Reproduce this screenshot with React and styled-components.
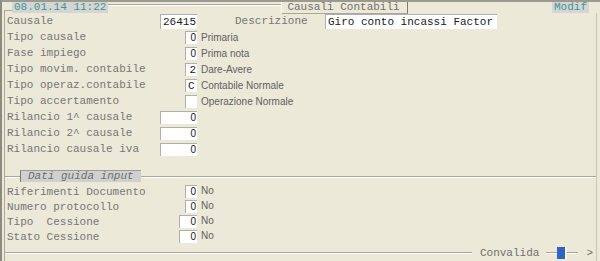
import React from 'react';
import styled, { createGlobalStyle } from 'styled-components';

const MONO = '"Liberation Mono", "Courier New", monospace';
const SANS = '"Liberation Sans", Arial, sans-serif';

const GlobalStyle = createGlobalStyle`
  html, body {
    margin: 0;
    padding: 0;
    background: #ece9d8;
  }
`;

// Window shell.
const Screen = styled.div`
  box-sizing: border-box;
  width: 600px;
  height: 261px;
  background: #ece9d8;
  border-top: 2px solid #9c9a8e;
  border-left: 2px solid #8d8b80;
  padding: 0 2px;
  display: flex;
  flex-direction: column;
  font-family: ${MONO};
  font-size: 11px;
  color: #767676;
  overflow: hidden;
`;

// Header with the tabs sitting on the frame edge.
const Header = styled.div`
  display: flex;
  align-items: flex-start;
  height: 11px;
  flex-shrink: 0;
`;

const Corner = styled.div`
  box-sizing: border-box;
  align-self: flex-end;
  width: 8px;
  height: 3px;
  border-top: 1px solid #aca899;
  border-left: 1px solid #aca899;
`;

const InfoTab = styled.div`
  height: 12px;
  line-height: 12px;
  padding: 0 2px;
  background: #d5d5d3;
  color: #3b9898;
  white-space: nowrap;
  margin-top: -1px;
`;

const Rule = styled.div`
  width: ${(p) => (p.$w ? `${p.$w}px` : 'auto')};
  flex: ${(p) => (p.$w ? '0 0 auto' : '1')};
  margin-top: ${(p) => p.$top ?? 2}px;
  border-top: 1px solid #aca899;
  border-bottom: 1px solid #fff;
`;

const TitleTab = styled.div`
  box-sizing: border-box;
  width: 127px;
  height: 13px;
  line-height: 12px;
  padding-left: 5px;
  margin-top: -1px;
  border-left: 1px solid #fff;
  border-right: 1px solid #7d7b70;
  border-bottom: 1px solid #aca899;
  color: #707070;
  white-space: nowrap;
`;

const Gap = styled.div`
  flex: 1;
`;

const Trail = styled.div`
  width: 9px;
`;

// Main frame.
const Frame = styled.div`
  flex: 1;
  display: flex;
  flex-direction: column;
  margin-right: 1px;
  padding-left: 2px;
  border-left: 1px solid #aca899;
  border-right: 1px solid #c9c6b6;
`;

const Rows = styled.div`
  display: flex;
  flex-direction: column;
`;

const Row = styled.div`
  display: flex;
  align-items: center;
  height: ${(p) => p.$h || 16}px;
  white-space: pre;
`;

const Label = styled.div`
  width: 153px;
  flex-shrink: 0;
`;

const Field = styled.div`
  width: 37px;
  display: flex;
  justify-content: flex-end;
  flex-shrink: 0;
`;

const Box = styled.div`
  box-sizing: border-box;
  width: ${(p) => p.$w}px;
  height: ${(p) => p.$h || 13}px;
  line-height: ${(p) => (p.$h || 13) - 1}px;
  background: #fff;
  border-top: 1px solid #b0b0ab;
  border-left: 1px solid #b0b0ab;
  padding: 0 1px 0 2px;
  text-align: ${(p) => (p.$left ? 'left' : 'right')};
  color: #1a1a1a;
  font-family: ${(p) => (p.$sans ? SANS : MONO)};
  font-size: ${(p) => (p.$sans ? 10 : 11)}px;
  overflow: hidden;
`;

const Note = styled.div`
  margin-left: 4px;
  font-family: ${SANS};
  font-size: 10px;
  color: #606060;
  align-self: ${(p) => (p.$up ? 'flex-start' : 'center')};
  margin-top: ${(p) => (p.$up ? 1 : 0)}px;
`;

const DescLabel = styled.div`
  margin-left: 38px;
  width: 90px;
`;

// Section header "Dati guida input".
const SectionHead = styled.div`
  display: flex;
  align-items: flex-start;
  height: 12px;
  margin: 13px 0 2px -2px;
`;

const SectionTab = styled.div`
  box-sizing: border-box;
  height: 12px;
  line-height: 11px;
  padding: 0 7px;
  background: #d0d0ce;
  border-left: 1px solid #7d7b70;
  border-top: 1px solid #9a9a96;
  font-style: italic;
  color: #6e6e6e;
  white-space: nowrap;
`;

// Footer.
const Footer = styled.div`
  margin-top: auto;
  margin-left: -2px;
  margin-bottom: 1px;
  height: 14px;
  display: flex;
  align-items: center;
`;

const FooterRule = styled.div`
  flex: ${(p) => (p.$w ? '0 0 auto' : '1')};
  width: ${(p) => (p.$w ? `${p.$w}px` : 'auto')};
  border-top: 1px solid #aca899;
  border-bottom: 1px solid #fff;
`;

const FooterText = styled.div`
  padding: 0 7px 0 8px;
  color: #707070;
`;

const Cursor = styled.div`
  width: 8px;
  height: 12px;
  background: #2f63c9;
  border-right: 2px solid #fbf8d8;
`;

const Arrow = styled.div`
  padding: 0 3px 0 8px;
  color: #707070;
`;

const topRows = [
  { label: 'Tipo causale', value: '0', w: 12, note: 'Primaria', sans: true },
  { label: 'Fase impiego', value: '0', w: 12, note: 'Prima nota', sans: true },
  { label: 'Tipo movim. contabile', value: '2', w: 12, note: 'Dare-Avere' },
  { label: 'Tipo operaz.contabile', value: 'C', w: 12, note: 'Contabile Normale', left: true },
  { label: 'Tipo accertamento', value: '', w: 12, note: 'Operazione Normale' },
  { label: 'Rilancio 1^ causale', value: '0', w: 37, sans: true },
  { label: 'Rilancio 2^ causale', value: '0', w: 37, sans: true },
  { label: 'Rilancio causale iva', value: '0', w: 37, sans: true },
];

const bottomRows = [
  { label: 'Riferimenti Documento', w: 12 },
  { label: 'Numero protocollo', w: 12 },
  { label: 'Tipo  Cessione', w: 18 },
  { label: 'Stato Cessione', w: 18 },
];

const App = () => (
  <>
    <GlobalStyle />
    <Screen>
      <Header>
        <Corner />
        <InfoTab>08.01.14 11:22</InfoTab>
        <Rule $w={173} />
        <TitleTab>Causali Contabili</TitleTab>
        <Gap />
        <InfoTab>Modif</InfoTab>
        <Trail />
      </Header>
      <Frame>
        <Rows>
          <Row>
            <Label>Causale</Label>
            <Field>
              <Box $w={37} $h={15}>26415</Box>
            </Field>
            <DescLabel>Descrizione</DescLabel>
            <Box $w={172} $h={15} $left>Giro conto incassi Factor</Box>
          </Row>
          {topRows.map((r) => (
            <Row key={r.label}>
              <Label>{r.label}</Label>
              <Field>
                <Box $w={r.w} $sans={r.sans} $left={r.left}>{r.value}</Box>
              </Field>
              {r.note && <Note>{r.note}</Note>}
            </Row>
          ))}
        </Rows>
        <SectionHead>
          <Rule $w={15} $top={6} />
          <SectionTab>Dati guida input</SectionTab>
          <Rule $top={6} />
        </SectionHead>
        <Rows>
          {bottomRows.map((r) => (
            <Row key={r.label} $h={15}>
              <Label>{r.label}</Label>
              <Field>
                <Box $w={r.w} $sans>0</Box>
              </Field>
              <Note $up>No</Note>
            </Row>
          ))}
        </Rows>
        <Footer>
          <FooterRule />
          <FooterText>Convalida</FooterText>
          <FooterRule $w={11} />
          <Cursor />
          <FooterRule $w={11} />
          <Arrow>&gt;</Arrow>
        </Footer>
      </Frame>
    </Screen>
  </>
);

export default App;
